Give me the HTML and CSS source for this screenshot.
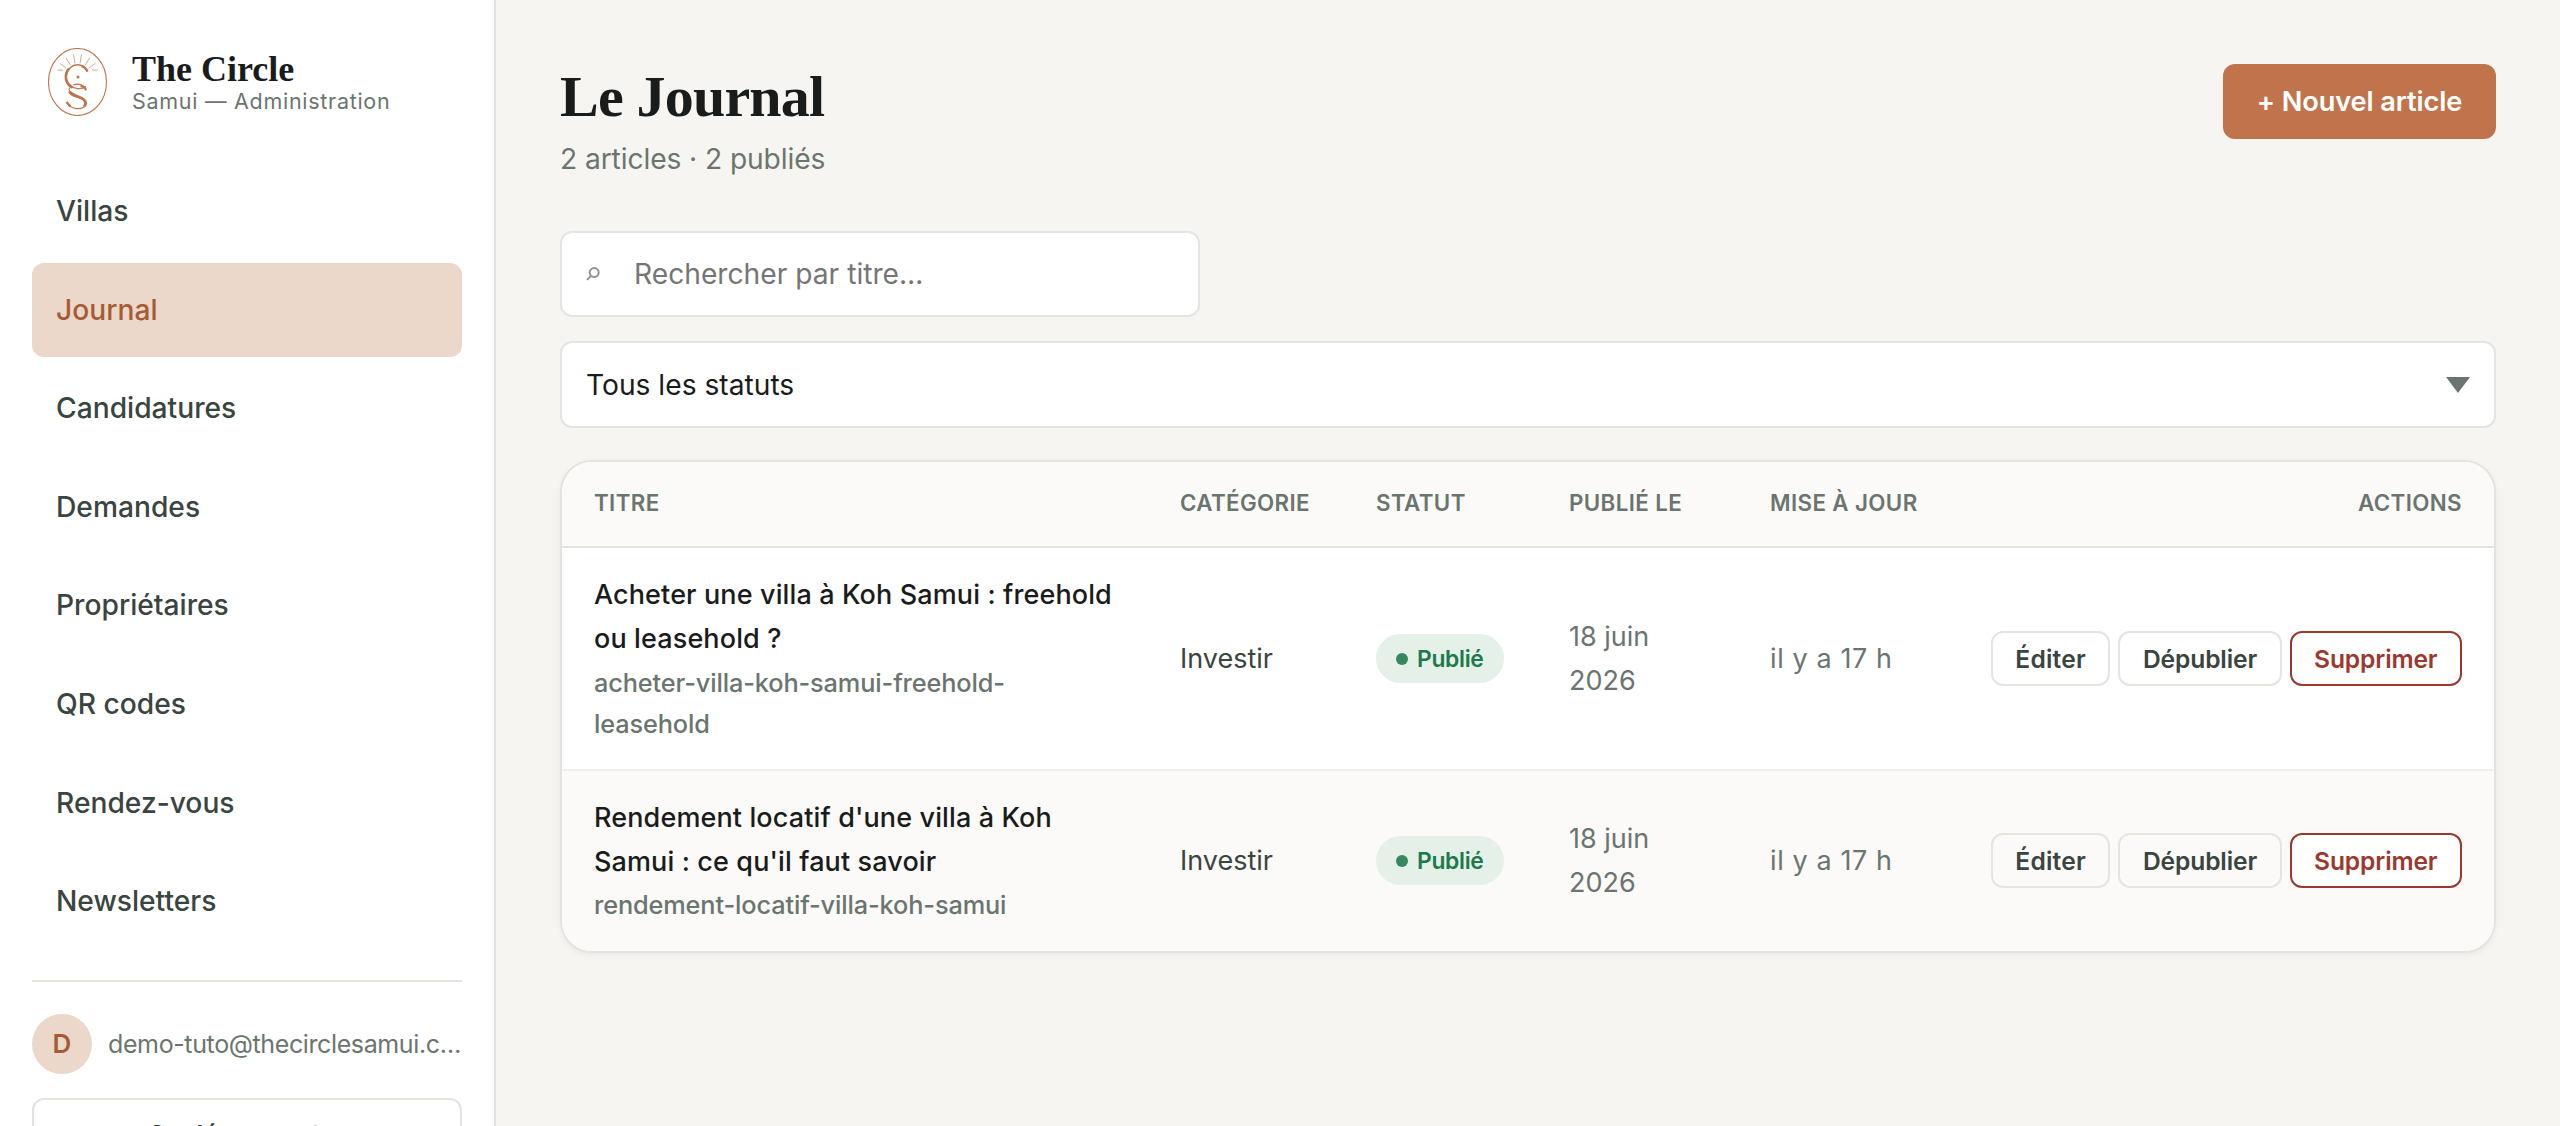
FILE: index.html
```html
<!DOCTYPE html>
<html lang="fr">
<head>
  <meta charset="UTF-8">
  <title>Le Journal – The Circle Samui</title>
  <link rel="stylesheet" href="styles.css">
</head>
<body>

<aside class="sidebar">
  <div class="brand">
    <svg class="brand-logo" viewBox="0 0 60 68" fill="none" stroke="#c1744b">
      <ellipse cx="29.5" cy="34" rx="29" ry="33.5" stroke-width="1.1"/>
      <!-- rayons -->
      <path d="M9.500 22.200h5.500M12 15.500l6 4.500M18 10l4.500 7M25.500 6.500l1.500 9M33.500 6.500l-1.500 9M42 9.500l-5 8M47.500 15l-7 5.500M49.500 22h-5.500" stroke-width="0.9" opacity="0.7"/>
      <!-- monogramme -->
      <path d="M39.500 23.500C36 16 27.500 15 22.500 19.500C17 25 17 33 22 37.500C26 41 33 42 38 38.500" stroke-width="1.300"/>
      <path d="M21 20.500C15.500 27 17.500 36 24.500 39.500" stroke-width="2.600"/>
      <path d="M33.500 18.200C36 18.800 38 20.500 39.500 23.500" stroke-width="2.400"/>
      <circle cx="30" cy="29" r="1.500" fill="#c1744b" stroke="none"/>
      <path d="M25 37C30 35 36 36 38 42.500M21.500 39.500C20 46 24 47.500 30 49.500C36 51.500 39 53 37.500 57C35 62 23 62.500 18.500 54" stroke-width="1.200"/>
      <path d="M21.500 43.500C24 48.500 34 48 37 53C38 55 37.500 57 36 58.500" stroke-width="2.800"/>
      <path d="M32.500 37.800C35 38 37 39.500 38 42" stroke-width="2.200"/>
      <path d="M18.500 54L22.500 58.500" stroke-width="2.200"/>
    </svg>
    <div class="brand-text">
      <div class="brand-name">The Circle</div>
      <div class="brand-sub">Samui — Administration</div>
    </div>
  </div>

  <nav class="nav">
    <a class="nav-link">Villas</a>
    <a class="nav-link active">Journal</a>
    <a class="nav-link">Candidatures</a>
    <a class="nav-link">Demandes</a>
    <a class="nav-link">Propriétaires</a>
    <a class="nav-link">QR codes</a>
    <a class="nav-link">Rendez-vous</a>
    <a class="nav-link">Newsletters</a>
  </nav>

  <div class="account">
    <div class="user">
      <span class="avatar">D</span>
      <span class="user-email">demo-tuto@thecirclesamui.c…</span>
    </div>
    <button class="logout">Se déconnecter</button>
  </div>
</aside>

<main class="main">
  <header class="page-header">
    <div>
      <h1 class="page-title">Le Journal</h1>
      <p class="page-sub">2 articles · 2 publiés</p>
    </div>
    <button class="btn-primary">+ Nouvel article</button>
  </header>

  <div class="search">
    <svg class="search-icon" viewBox="0 0 14 14" fill="none" stroke="#8a928e" stroke-width="1.900">
      <circle cx="8.200" cy="5.500" r="4.500"/>
      <path d="M5 8.800L1 12.800"/>
    </svg>
    <span class="placeholder">Rechercher par titre…</span>
  </div>

  <div class="select">
    <span>Tous les statuts</span>
    <span class="select-arrow"></span>
  </div>

  <div class="table-card">
    <table class="table">
      <colgroup>
        <col class="col-title"><col class="col-cat"><col class="col-status"><col class="col-date"><col class="col-update"><col>
      </colgroup>
      <thead>
        <tr>
          <th>Titre</th>
          <th>Catégorie</th>
          <th>Statut</th>
          <th>Publié le</th>
          <th>Mise à jour</th>
          <th class="right">Actions</th>
        </tr>
      </thead>
      <tbody>
        <tr>
          <td>
            <div class="title">Acheter une villa à Koh Samui : freehold<br>ou leasehold ?</div>
            <div class="slug">acheter-villa-koh-samui-freehold-<br>leasehold</div>
          </td>
          <td>Investir</td>
          <td><span class="badge">Publié</span></td>
          <td class="muted">18 juin<br>2026</td>
          <td class="muted updated">il y a 17 h</td>
          <td>
            <div class="actions">
              <button class="btn btn-edit">Éditer</button>
              <button class="btn">Dépublier</button>
              <button class="btn btn-danger">Supprimer</button>
            </div>
          </td>
        </tr>
        <tr>
          <td>
            <div class="title">Rendement locatif d'une villa à Koh<br>Samui : ce qu'il faut savoir</div>
            <div class="slug">rendement-locatif-villa-koh-samui</div>
          </td>
          <td>Investir</td>
          <td><span class="badge">Publié</span></td>
          <td class="muted">18 juin<br>2026</td>
          <td class="muted updated">il y a 17 h</td>
          <td>
            <div class="actions">
              <button class="btn btn-edit">Éditer</button>
              <button class="btn">Dépublier</button>
              <button class="btn btn-danger">Supprimer</button>
            </div>
          </td>
        </tr>
      </tbody>
    </table>
  </div>
</main>

</body>
</html>
```
FILE: styles.css
```css
* {
  box-sizing: border-box;
}

body {
  margin: 0;
  height: 1126px;
  display: flex;
  overflow: hidden;
  background: #f7f5f1;
  color: #1a1c1b;
  font-family: Inter, "Liberation Sans", sans-serif;
  font-size: 28px;
}

button {
  font-family: inherit;
  white-space: nowrap;
}

/* Sidebar */
.sidebar {
  width: 496px;
  flex: none;
  padding: 48px 32px 0;
  background: #fff;
  border-right: 2px solid #e4e4de;
}

.brand {
  display: flex;
  align-items: center;
  gap: 24px;
  height: 68px;
  padding-left: 16px;
  margin-bottom: 48px;
}

.brand-logo {
  width: 60px;
  height: 68px;
  flex: none;
}

.brand-name {
  font-family: "Liberation Serif", serif;
  font-weight: bold;
  font-size: 36px;
  line-height: 38px;
  letter-spacing: 0;
}

.brand-sub {
  font-size: 21.5px;
  line-height: 26px;
  letter-spacing: 0.72px;
  color: #6b756f;
}

.nav {
  display: flex;
  flex-direction: column;
  gap: 4.6px;
}

.nav-link {
  height: 94px;
  display: flex;
  align-items: center;
  padding: 0 24px;
  border-radius: 12px;
  font-weight: 500;
  font-size: 28.2px;
  color: #3a4440;
}

.nav-link.active {
  background: #ebd8ca;
  color: #a55c35;
}

.account {
  margin-top: 31.8px;
  padding-top: 32px;
  border-top: 2px solid #e4e4de;
}

.user {
  display: flex;
  align-items: center;
  gap: 16px;
  margin-bottom: 24px;
}

.avatar {
  width: 60px;
  height: 60px;
  flex: none;
  display: flex;
  align-items: center;
  justify-content: center;
  border-radius: 50%;
  background: #ebd8ca;
  color: #a55c35;
  font-weight: 600;
  font-size: 26px;
}

.user-email {
  font-size: 25px;
  letter-spacing: -0.38px;
  color: #6b756f;
  white-space: nowrap;
}

.logout {
  width: 100%;
  height: 74px;
  border: 2px solid #e4e4de;
  border-radius: 12px;
  background: #fff;
  color: #3a4440;
  font-weight: 600;
  font-size: 26px;
  letter-spacing: -0.1px;
}

/* Contenu */
.main {
  flex: 1;
  padding: 64px 64px 0;
}

.page-header {
  display: flex;
  justify-content: space-between;
  align-items: flex-start;
  height: 167px;
}

.page-title {
  margin: 0;
  font-family: "Liberation Serif", serif;
  font-weight: bold;
  font-size: 58px;
  line-height: 66px;
  letter-spacing: -0.8px;
}

.page-sub {
  margin: 6px 0 0;
  font-size: 28.2px;
  line-height: 46px;
  letter-spacing: -0.1px;
  color: #6b756f;
}

.btn-primary {
  width: 273px;
  height: 75px;
  border: none;
  border-radius: 12px;
  background: #c1744b;
  color: #fff;
  font-weight: 600;
  font-size: 27.2px;
  letter-spacing: -0.1px;
}

.search,
.select {
  display: flex;
  align-items: center;
  background: #fff;
  border: 2px solid #e5e4df;
  border-radius: 12px;
  padding: 0 24px;
  font-size: 28.2px;
}

.search {
  width: 640px;
  height: 86px;
  gap: 34px;
}

.search-icon {
  width: 14px;
  height: 14px;
}

.placeholder {
  color: #757575;
}

.select {
  height: 87px;
  margin-top: 24px;
  justify-content: space-between;
}

.select-arrow {
  border: 12px solid transparent;
  border-top: 16px solid #6b756f;
  border-bottom: none;
}

/* Tableau */
.table-card {
  margin-top: 32px;
  background: #fff;
  border: 2px solid #e5e3dd;
  border-radius: 32px;
  overflow: hidden;
  box-shadow: 0 2px 6px rgba(26, 28, 27, 0.06);
}

.table {
  width: 100%;
  table-layout: fixed;
  border-collapse: separate;
  border-spacing: 0;
}

.col-title { width: 586px; }
.col-cat { width: 196px; }
.col-status { width: 193px; }
.col-date { width: 201px; }
.col-update { width: 200px; }

.table th {
  height: 86px;
  padding: 0 0 3px 32px;
  border-bottom: 2px solid #e5e3dd;
  background: #fbfaf8;
  color: #6b756f;
  font-size: 22.3px;
  font-weight: 600;
  letter-spacing: 0.4px;
  text-align: left;
  text-transform: uppercase;
}

.table th.right {
  padding-right: 32px;
  text-align: right;
}

.table td {
  padding: 25px 0 24px 32px;
  vertical-align: middle;
  font-size: 27px;
  line-height: 44.3px;
  color: #3a4440;
  white-space: nowrap;
}

.table tbody tr:first-child td {
  border-bottom: 2px solid #eeeeea;
}

.table tbody tr:nth-child(2) td {
  padding-bottom: 25px;
  background: #fbfaf8;
}

.table td:last-child {
  padding-left: 0;
  padding-right: 32px;
}

.title {
  font-weight: 500;
  letter-spacing: 0.12px;
  color: #1a1c1b;
}

.slug {
  font-weight: 500;
  font-size: 25.3px;
  line-height: 41.6px;
  letter-spacing: -0.12px;
  color: #6b756f;
}

.table td.muted {
  color: #6b756f;
}

.table td.updated {
  letter-spacing: 0.6px;
}

.badge {
  display: inline-flex;
  align-items: center;
  gap: 9px;
  width: 128px;
  height: 49px;
  padding-left: 20px;
  border-radius: 25px;
  background: #e4f0e8;
  color: #1d7a4c;
  font-weight: 600;
  font-size: 22.8px;
  letter-spacing: -0.3px;
  vertical-align: middle;
}

.badge::before {
  content: "";
  width: 12px;
  height: 12px;
  border-radius: 50%;
  background: #35895d;
}

.actions {
  display: flex;
  justify-content: flex-end;
  gap: 8px;
}

.btn {
  height: 55px;
  padding: 0 22.5px;
  border: 2px solid #e5e4df;
  border-radius: 12px;
  background: transparent;
  color: #3a4440;
  font-weight: 600;
  font-size: 24.6px;
  letter-spacing: -0.13px;
}

.btn-edit {
  letter-spacing: 0.2px;
}

.btn-danger {
  background: #fff;
  border-color: #9c382d;
  color: #9c382d;
}
```
